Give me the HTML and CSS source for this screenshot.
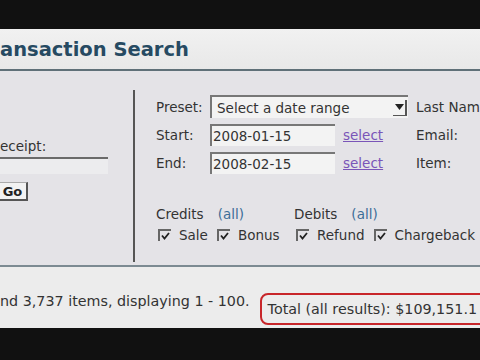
FILE: index.html
```html
<!DOCTYPE html>
<html lang="en">
<head>
    <meta charset="UTF-8">
    <meta name="viewport" content="width=device-width, initial-scale=1.0">
    <title>Transaction Search</title>
    <link rel="stylesheet" href="styles.css">
</head>
<body>
    <div class="screen">
        <div class="title-bar">
            <h1>ansaction Search</h1>
        </div>

        <div class="search-panel">
            <!-- Tìm theo biên nhận -->
            <div class="receipt-col">
                <label for="receipt">eceipt:</label>
                <input type="text" id="receipt" class="receipt-input">
                <button type="button" class="go-btn">Go</button>
            </div>

            <div class="filter-col">
                <div class="date-grid">
                    <span class="lbl">Preset:</span>
                    <div class="select">
                        <span>Select a date range</span>
                        <span class="arrow">
                            <svg width="9" height="7" viewBox="0 0 9 7"><path d="M0 0 L9 0 L4.5 6 Z" fill="#222"/></svg>
                        </span>
                    </div>
                    <span class="lbl">Last Name:</span>

                    <span class="lbl">Start:</span>
                    <input type="text" class="date-input" value="2008-01-15">
                    <a href="#" class="pick">select</a>
                    <span class="lbl">Email:</span>

                    <span class="lbl">End:</span>
                    <input type="text" class="date-input" value="2008-02-15">
                    <a href="#" class="pick">select</a>
                    <span class="lbl">Item:</span>
                </div>

                <div class="type-row">
                    <div class="type-group credits">
                        <div class="group-head">Credits <a href="#" class="all">(all)</a></div>
                        <div class="checks">
                            <span class="check"><span class="box"><svg width="9" height="8" viewBox="0 0 9 8"><path d="M1 3.5 L3.5 6.5 L8 1" fill="none" stroke="#222" stroke-width="1.8"/></svg></span>Sale</span>
                            <span class="check"><span class="box"><svg width="9" height="8" viewBox="0 0 9 8"><path d="M1 3.5 L3.5 6.5 L8 1" fill="none" stroke="#222" stroke-width="1.8"/></svg></span>Bonus</span>
                        </div>
                    </div>
                    <div class="type-group">
                        <div class="group-head">Debits <a href="#" class="all">(all)</a></div>
                        <div class="checks">
                            <span class="check"><span class="box"><svg width="9" height="8" viewBox="0 0 9 8"><path d="M1 3.5 L3.5 6.5 L8 1" fill="none" stroke="#222" stroke-width="1.8"/></svg></span>Refund</span>
                            <span class="check"><span class="box"><svg width="9" height="8" viewBox="0 0 9 8"><path d="M1 3.5 L3.5 6.5 L8 1" fill="none" stroke="#222" stroke-width="1.8"/></svg></span>Chargeback</span>
                        </div>
                    </div>
                </div>
            </div>
        </div>

        <!-- Kết quả -->
        <div class="results">
            <span class="count">nd 3,737 items, displaying 1 - 100.</span>
            <span class="total">Total (all results): $109,151.1</span>
        </div>
    </div>
</body>
</html>
```

FILE: styles.css
```css
body {
    margin: 0;
    background-color: #111;
    font-family: "DejaVu Sans", Verdana, sans-serif;
    color: #333;
    overflow: hidden;
    height: 360px;
}

.screen {
    margin-top: 29px;
    width: 480px;
    overflow: hidden;
}

.title-bar {
    height: 40px;
    background: linear-gradient(#f1f1f1, #e8e8e8);
    border-bottom: 2px solid #5f7078;
    display: flex;
    align-items: center;
}

h1 {
    margin: 0;
    font-size: 19.5px;
    font-weight: bold;
    color: #264a62;
    white-space: nowrap;
}

.search-panel {
    height: 194px;
    background-color: #e4e3e7;
    display: flex;
}

/* Cột biên nhận */
.receipt-col {
    width: 133px;
    flex-shrink: 0;
    padding-top: 67px;
    font-size: 13.5px;
    display: flex;
    flex-direction: column;
    align-items: flex-start;
}

.receipt-input {
    margin: 3px 0 0 -10px;
    width: 118px;
    height: 17px;
    box-sizing: border-box;
    border: none;
    border-top: 2px solid #6a6a6a;
    background-color: #ececee;
}

.go-btn {
    margin: 8px 0 0 -12px;
    width: 40px;
    height: 19px;
    padding: 0 0 0 10px;
    font-family: "DejaVu Sans", Verdana, sans-serif;
    font-size: 13px;
    font-weight: bold;
    color: #222;
    background-color: #f2f2f2;
    border: 1px solid #aaa;
    border-right: 2px solid #555;
    border-bottom: 2px solid #555;
}

.filter-col {
    border-left: 2px solid #555;
    margin: 19px 0 3px;
    padding: 5px 0 0 21px;
    font-size: 13.5px;
    flex: 1;
    min-width: 0;
}

.date-grid {
    display: grid;
    grid-template-columns: 54px 133px 73px auto;
    grid-auto-rows: 23px;
    row-gap: 5px;
    align-items: center;
    white-space: nowrap;
}

.select {
    grid-column: span 2;
    width: 198px;
    height: 23px;
    box-sizing: border-box;
    border-top: 2px solid #777;
    border-left: 2px solid #777;
    background-color: #f3f3f3;
    display: flex;
    align-items: center;
    justify-content: space-between;
    padding-left: 5px;
}

.arrow {
    width: 12px;
    height: 15px;
    border-right: 2px solid #555;
    border-bottom: 1px solid #555;
    display: flex;
    align-items: center;
    justify-content: center;
    margin-right: 1px;
}

.date-input {
    width: 125px;
    height: 22px;
    box-sizing: border-box;
    border: none;
    border-top: 2px solid #777;
    border-left: 2px solid #777;
    background-color: #f3f3f3;
    padding: 0 0 0 1px;
    font-family: "DejaVu Sans", Verdana, sans-serif;
    font-size: 13.5px;
    color: #333;
}

.pick {
    color: #7a55b8;
    text-decoration: underline;
}

.type-row {
    display: flex;
    margin-top: 29px;
    white-space: nowrap;
}

.type-group.credits {
    width: 138px;
    flex-shrink: 0;
}

.group-head {
    height: 21px;
    display: flex;
    align-items: center;
    gap: 14px;
}

.all {
    color: #3d6e98;
    text-decoration: none;
}

.checks {
    display: flex;
    align-items: center;
    height: 21px;
    padding-left: 2px;
}

.check {
    display: flex;
    align-items: center;
    margin-right: 9px;
}

.box {
    width: 11px;
    height: 10px;
    border-top: 2px solid #666;
    border-left: 2px solid #666;
    display: flex;
    align-items: center;
    justify-content: center;
    margin-right: 8px;
}

/* Dòng kết quả */
.results {
    height: 63px;
    box-sizing: border-box;
    border-top: 2px solid #7c8a92;
    background-color: #ececec;
    padding-top: 26px;
    display: flex;
    align-items: flex-start;
    white-space: nowrap;
    font-size: 14.3px;
}

.total {
    margin-left: 10px;
    height: 32px;
    box-sizing: border-box;
    padding: 0 30px 0 6px;
    border: 2px solid #c8262a;
    border-radius: 8px;
    display: flex;
    align-items: center;
}
```
